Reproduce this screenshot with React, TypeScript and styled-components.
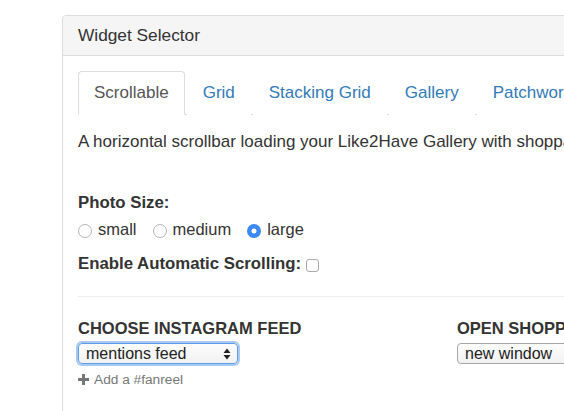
import { useState } from "react";
import styled, { createGlobalStyle } from "styled-components";

const GlobalStyle = createGlobalStyle`
  html, body {
    margin: 0;
    padding: 0;
    background: #fff;
    overflow: hidden;
  }
  body {
    font-family: "Liberation Sans", Arial, Helvetica, sans-serif;
    color: #333;
  }
`;

const Page = styled.div`
  padding: 15px 0 0 62px;
  width: 564px;
  height: 411px;
  box-sizing: border-box;
  overflow: hidden;
`;

const Panel = styled.div`
  width: 620px;
  height: 420px;
  border: 1px solid #ddd;
  border-radius: 4px;
  box-sizing: border-box;
`;

const PanelHeading = styled.div`
  background: #f5f5f5;
  border-bottom: 1px solid #ddd;
  border-radius: 3px 3px 0 0;
  padding: 0 15px;
  height: 39px;
  line-height: 39px;
  font-size: 17.3px;
`;

const PanelBody = styled.div`
  padding: 15px;
`;

const Tabs = styled.ul`
  display: flex;
  list-style: none;
  margin: 0;
  padding: 0;
  border-bottom: 1px solid #ddd;
`;

const Tab = styled.li<{ $active?: boolean }>`
  margin-right: 2px;
  margin-bottom: -1px;
  padding: 10px 15px;
  line-height: 22px;
  font-size: 17px;
  white-space: nowrap;
  border: 1px solid ${(p) => (p.$active ? "#ddd" : "transparent")};
  border-bottom-color: ${(p) => (p.$active ? "#fff" : "transparent")};
  border-radius: 4px 4px 0 0;
  background: #fff;
  color: ${(p) => (p.$active ? "#555" : "#337ab7")};
  cursor: pointer;
`;

const Description = styled.p`
  margin: 17px 0 0;
  font-size: 17px;
  line-height: 20px;
  white-space: nowrap;
`;

const Label = styled.div`
  font-size: 16.8px;
  font-weight: bold;
  line-height: 20px;
  display: flex;
  align-items: center;
  gap: 5px;
`;

const PhotoLabel = styled(Label)`
  margin-top: 41px;
`;

const RadioRow = styled.div`
  display: flex;
  align-items: center;
  height: 20px;
  margin-top: 6px;
  font-size: 16.5px;
`;

const RadioOption = styled.label`
  display: flex;
  align-items: center;
  margin-right: 16px;
  cursor: pointer;
`;

const Radio = styled.input.attrs({ type: "radio" })`
  appearance: none;
  width: 14px;
  height: 14px;
  margin: 4px 6px 0 0;
  border-radius: 50%;
  border: 1px solid #b4b4b4;
  background: #fff;
  box-sizing: border-box;
  &:checked {
    border: none;
    background: radial-gradient(circle, #fff 0 2.2px, #3b88f6 2.8px);
  }
`;

const ScrollLabel = styled(Label)`
  margin-top: 15px;
`;

const Checkbox = styled.input.attrs({ type: "checkbox" })`
  appearance: none;
  width: 13px;
  height: 13px;
  margin: 2px 0 0;
  border: 1px solid #a9a9a9;
  border-radius: 3px;
  background: #fff;
  box-sizing: border-box;
`;

const Divider = styled.hr`
  border: 0;
  border-top: 1px solid #eee;
  margin: 22px 0 0;
`;

const Columns = styled.div`
  display: grid;
  grid-template-columns: 379px 1fr;
  margin-top: 21px;
`;

const Column = styled.div`
  display: flex;
  flex-direction: column;
  align-items: flex-start;
`;

const SectionTitle = styled.div`
  font-size: 16.5px;
  font-weight: bold;
  line-height: 20px;
  white-space: nowrap;
`;

const SelectBox = styled.div<{ $focused?: boolean }>`
  position: relative;
  margin-top: 5px;
  height: 21px;
  width: ${(p) => (p.$focused ? "160px" : "140px")};
  box-sizing: border-box;
  border-radius: 4px;
  border: 1px solid ${(p) => (p.$focused ? "#5b9ce6" : "#a6a6a6")};
  box-shadow: ${(p) => (p.$focused ? "0 0 0 2px #a9c9f2" : "none")};
  background: linear-gradient(#fdfdfd, #f1f1f1);
`;

const Select = styled.select`
  appearance: none;
  border: 0;
  background: transparent;
  width: 100%;
  height: 100%;
  padding: 0 0 0 7px;
  font-family: "Liberation Sans", Arial, sans-serif;
  font-size: 16px;
  color: #222;
  outline: none;
`;

const Arrows = styled.svg`
  position: absolute;
  right: 6px;
  top: 4px;
  pointer-events: none;
`;

const AddLink = styled.a`
  display: flex;
  align-items: center;
  gap: 5px;
  margin-top: 8px;
  font-size: 13.7px;
  color: #777;
  text-decoration: none;
  cursor: pointer;
`;

const tabs = ["Scrollable", "Grid", "Stacking Grid", "Gallery", "Patchwork"];
const sizes = ["small", "medium", "large"];

export default function App() {
  const [active, setActive] = useState("Scrollable");
  const [size, setSize] = useState("large");
  const [feed, setFeed] = useState("mentions");
  const [target, setTarget] = useState("new");

  return (
    <Page>
      <GlobalStyle />
      <Panel>
        <PanelHeading>Widget Selector</PanelHeading>
        <PanelBody>
          <Tabs>
            {tabs.map((t) => (
              <Tab key={t} $active={t === active} onClick={() => setActive(t)}>
                {t}
              </Tab>
            ))}
          </Tabs>
          <Description>
            A horizontal scrollbar loading your Like2Have Gallery with shoppable
            photos.
          </Description>

          <PhotoLabel>Photo Size:</PhotoLabel>
          <RadioRow>
            {sizes.map((s) => (
              <RadioOption key={s}>
                <Radio
                  name="size"
                  checked={size === s}
                  onChange={() => setSize(s)}
                />
                {s}
              </RadioOption>
            ))}
          </RadioRow>
          <ScrollLabel>
            Enable Automatic Scrolling: <Checkbox />
          </ScrollLabel>

          <Divider />

          <Columns>
            <Column>
              <SectionTitle>CHOOSE INSTAGRAM FEED</SectionTitle>
              <SelectBox $focused>
                <Select value={feed} onChange={(e) => setFeed(e.target.value)}>
                  <option value="mentions">mentions feed</option>
                  <option value="user">user feed</option>
                </Select>
                <Arrows width="8" height="12" viewBox="0 0 8 12">
                  <path d="M4 0.5 L7.5 5 H0.5 Z M4 11.5 L7.5 7 H0.5 Z" fill="#222" />
                </Arrows>
              </SelectBox>
              <AddLink>
                <svg width="11" height="11" viewBox="0 0 11 11">
                  <path d="M4 0 H7 V4 H11 V7 H7 V11 H4 V7 H0 V4 H4 Z" fill="#777" />
                </svg>
                Add a #fanreel
              </AddLink>
            </Column>
            <Column>
              <SectionTitle>OPEN SHOPPING LINKS IN</SectionTitle>
              <SelectBox>
                <Select value={target} onChange={(e) => setTarget(e.target.value)}>
                  <option value="new">new window</option>
                  <option value="same">same window</option>
                </Select>
              </SelectBox>
            </Column>
          </Columns>
        </PanelBody>
      </Panel>
    </Page>
  );
}
